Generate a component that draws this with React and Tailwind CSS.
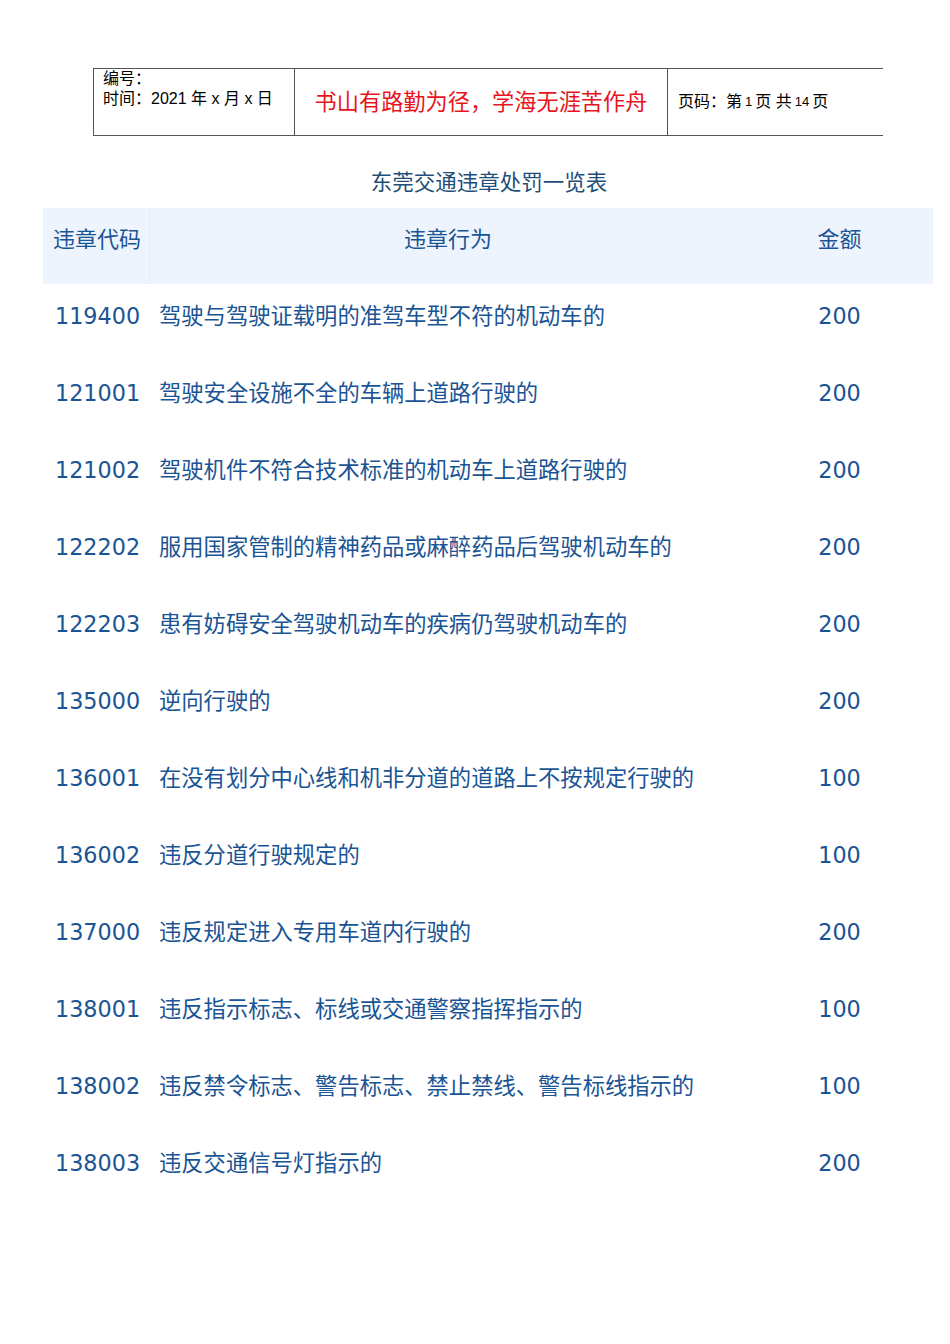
const rows = [
  ["119400", "驾驶与驾驶证载明的准驾车型不符的机动车的", "200"],
  ["121001", "驾驶安全设施不全的车辆上道路行驶的", "200"],
  ["121002", "驾驶机件不符合技术标准的机动车上道路行驶的", "200"],
  ["122202", "服用国家管制的精神药品或麻醉药品后驾驶机动车的", "200"],
  ["122203", "患有妨碍安全驾驶机动车的疾病仍驾驶机动车的", "200"],
  ["135000", "逆向行驶的", "200"],
  ["136001", "在没有划分中心线和机非分道的道路上不按规定行驶的", "100"],
  ["136002", "违反分道行驶规定的", "100"],
  ["137000", "违反规定进入专用车道内行驶的", "200"],
  ["138001", "违反指示标志、标线或交通警察指挥指示的", "100"],
  ["138002", "违反禁令标志、警告标志、禁止禁线、警告标线指示的", "100"],
  ["138003", "违反交通信号灯指示的", "200"],
];

const App = () => {
  return (
    <div className="w-[950px] h-[1344px] bg-white font-['DejaVu_Sans','Noto_Sans_CJK_SC',sans-serif]">
      <div className="pt-[68px] pl-[93px]">
        <div className="flex w-[790px] h-[68px] border-t border-b border-l border-[#555] font-['Liberation_Sans','Noto_Sans_CJK_SC',sans-serif] text-black">
          <div className="w-[201px] border-r border-[#555] pl-[9px] pt-0 text-[16px] leading-[20px]">
            <div>编号：</div>
            <div>时间：2021 年 x 月 x 日</div>
          </div>
          <div className="w-[373px] border-r border-[#555] flex items-center justify-center pt-[2px] text-[22.2px] text-[#e8141c]">
            书山有路勤为径，学海无涯苦作舟
          </div>
          <div className="flex-1 flex items-center pl-[10px] text-[16px]">
            页码：第 <span className="text-[13px] mx-[3px]">1</span> 页 共 <span className="text-[13px] mx-[3px]">14</span> 页
          </div>
        </div>
      </div>

      <div className="h-[72px] pt-[33px] pl-[28px] text-center text-[21.5px] leading-[28px] text-[#1f4e79]">
        东莞交通违章处罚一览表
      </div>

      <div className="ml-[43px] w-[890px]">
        <div className="flex h-[76px] bg-[#eef4fd] text-[#1a5494] text-[22px] leading-[30px]">
          <div className="w-[107px] border-r border-[#e6edf8] pl-[10px] pt-[17px]">违章代码</div>
          <div className="w-[596px] text-center pt-[17px]">违章行为</div>
          <div className="flex-1 text-center pt-[17px]">金额</div>
        </div>
        {rows.map((r) => (
          <div key={r[0]} className="flex h-[77px] text-[#1a5494] text-[22.3px] leading-[30px]">
            <div className="w-[107px] pl-[12px] pt-[17px]">{r[0]}</div>
            <div className="w-[596px] pl-[9px] pt-[17px]">{r[1]}</div>
            <div className="flex-1 text-center pt-[17px]">{r[2]}</div>
          </div>
        ))}
      </div>
    </div>
  );
};

export default App;
